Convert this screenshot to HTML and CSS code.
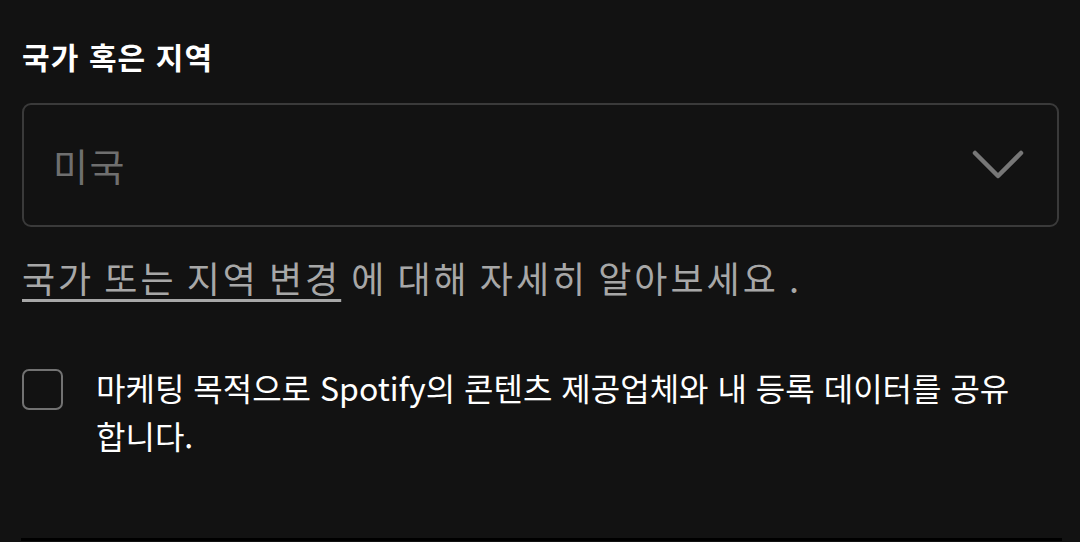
FILE: index.html
```html
<!DOCTYPE html>
<html lang="ko">
<head>
<meta charset="utf-8">
<link rel="stylesheet" href="styles.css">
</head>
<body>
<main class="form">
  <label class="field-label" for="country">국가 혹은 지역</label>
  <div class="select" id="country">
    <span class="select-value">미국</span>
    <svg class="chevron" width="52" height="32" viewBox="0 0 52 32" aria-hidden="true">
      <polyline points="3,3 26,26 49,3" fill="none" stroke="#777777" stroke-width="4.5" stroke-linecap="round" stroke-linejoin="round"/>
    </svg>
  </div>
  <p class="help"><a class="help-link" href="#">국가 또는 지역 변경</a> 에 대해 자세히 알아보세요 .</p>
  <div class="check-row">
    <span class="checkbox"></span>
    <p class="check-text">마케팅 목적으로 Spotify의 콘텐츠 제공업체와 내 등록 데이터를 공유 합니다.</p>
  </div>
  <div class="divider"></div>
</main>
</body>
</html>
```

FILE: styles.css
```css
html, body {
  margin: 0;
  padding: 0;
  background: #121212;
  height: 100%;
  overflow: hidden;
}
body {
  font-family: "Noto Sans CJK KR", "Noto Sans", sans-serif;
}
.form {
  padding: 32px 21px 0 22px;
  display: flex;
  flex-direction: column;
}
.field-label {
  color: #ffffff;
  font-weight: 700;
  font-size: 30px;
  letter-spacing: 1.1px;
  line-height: 48px;
  display: block;
}
.select {
  margin-top: 23px;
  height: 124px;
  box-sizing: border-box;
  border: 2px solid #3a3a3a;
  border-radius: 9px;
  display: flex;
  align-items: center;
  justify-content: space-between;
  padding: 0 33px 0 29px;
}
.select-value {
  color: #6f6f6f;
  font-size: 38px;
  letter-spacing: 1.5px;
  line-height: 48px;
}
.chevron {
  display: block;
  margin-top: 2px;
}
.help {
  margin: 26px 0 0;
  color: #a7a7a7;
  font-size: 36px;
  letter-spacing: 3px;
  word-spacing: -3px;
  line-height: 48px;
}
.help-link {
  color: #a7a7a7;
  text-decoration: underline;
  text-decoration-thickness: 3px;
  text-underline-offset: 6px;
}
.check-row {
  margin-top: 62px;
  display: flex;
  align-items: flex-start;
  gap: 33px;
}
.checkbox {
  flex: none;
  width: 41px;
  height: 41px;
  box-sizing: border-box;
  border: 2px solid #727272;
  border-radius: 7px;
  margin-top: 6px;
}
.check-text {
  margin: 0;
  color: #ffffff;
  font-size: 32px;
  line-height: 48px;
  word-break: keep-all;
}
.divider {
  margin-top: 79px;
  height: 3px;
  background: #000000;
  margin-left: -1px;
  margin-right: -3px;
}
```
